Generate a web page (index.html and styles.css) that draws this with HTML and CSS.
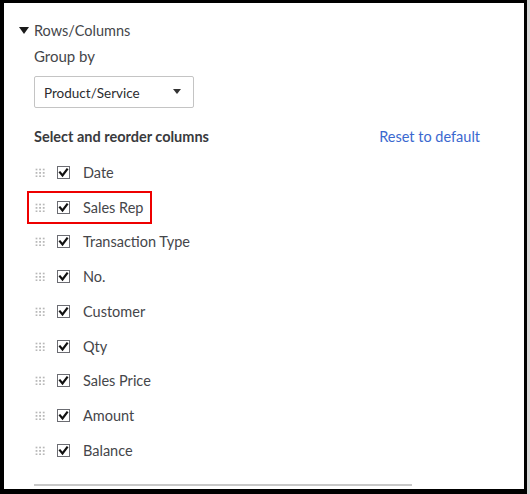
FILE: index.html
```html
<!DOCTYPE html>
<html>
<head>
<meta charset="utf-8">
<link rel="stylesheet" href="styles.css">
</head>
<body>
<div class="frame">
  <div class="panel">
    <div class="section-head">
      <span class="caret"></span>
      <span class="section-title">Rows/Columns</span>
    </div>
    <div class="content">
      <div class="label">Group by</div>
      <div class="select">
        <span>Product/Service</span>
        <span class="select-arrow"></span>
      </div>
      <div class="cols-head">
        <span class="cols-title">Select and reorder columns</span>
        <span class="reset">Reset to default</span>
      </div>
      <ul class="cols">
        <li class="col"><span class="grip"></span><span class="cb"><svg viewBox="0 0 13 13"><path d="M3 6.5 L5.5 9.5 L10 3.5" /></svg></span><span class="name">Date</span></li>
        <li class="col highlight"><span class="grip"></span><span class="cb"><svg viewBox="0 0 13 13"><path d="M3 6.5 L5.5 9.5 L10 3.5" /></svg></span><span class="name">Sales Rep</span></li>
        <li class="col"><span class="grip"></span><span class="cb"><svg viewBox="0 0 13 13"><path d="M3 6.5 L5.5 9.5 L10 3.5" /></svg></span><span class="name">Transaction Type</span></li>
        <li class="col"><span class="grip"></span><span class="cb"><svg viewBox="0 0 13 13"><path d="M3 6.5 L5.5 9.5 L10 3.5" /></svg></span><span class="name">No.</span></li>
        <li class="col"><span class="grip"></span><span class="cb"><svg viewBox="0 0 13 13"><path d="M3 6.5 L5.5 9.5 L10 3.5" /></svg></span><span class="name">Customer</span></li>
        <li class="col"><span class="grip"></span><span class="cb"><svg viewBox="0 0 13 13"><path d="M3 6.5 L5.5 9.5 L10 3.5" /></svg></span><span class="name">Qty</span></li>
        <li class="col"><span class="grip"></span><span class="cb"><svg viewBox="0 0 13 13"><path d="M3 6.5 L5.5 9.5 L10 3.5" /></svg></span><span class="name">Sales Price</span></li>
        <li class="col"><span class="grip"></span><span class="cb"><svg viewBox="0 0 13 13"><path d="M3 6.5 L5.5 9.5 L10 3.5" /></svg></span><span class="name">Amount</span></li>
        <li class="col"><span class="grip"></span><span class="cb"><svg viewBox="0 0 13 13"><path d="M3 6.5 L5.5 9.5 L10 3.5" /></svg></span><span class="name">Balance</span></li>
      </ul>
      <div class="divider"></div>
    </div>
  </div>
  <div class="edge"></div>
</div>
</body>
</html>
```
FILE: styles.css
```css
html, body {
  margin: 0;
  padding: 0;
  background: #000;
}
body {
  width: 530px;
  height: 494px;
  overflow: hidden;
  font-family: "Lato", "Open Sans", sans-serif;
  color: #393a3d;
}
.frame {
  display: flex;
  height: 494px;
  background: #000;
}
.panel {
  margin: 3px 0 5px 4px;
  width: 520px;
  height: 486px;
  background: #fff;
  box-sizing: border-box;
  padding-top: 19px;
  overflow: hidden;
}
.edge {
  margin-left: 3px;
  width: 3px;
  background: #d6d6d6;
}
.section-head {
  display: flex;
  align-items: center;
  height: 16px;
  padding-left: 15px;
}
.caret {
  width: 0;
  height: 0;
  border-left: 5px solid transparent;
  border-right: 5px solid transparent;
  border-top: 7px solid #1a1a1a;
  margin-right: 5px;
}
.section-title {
  font-size: 14.5px;
  color: #45464a;
}
.content {
  padding-left: 30px;
  padding-right: 44px;
}
.label {
  margin-top: 8px;
  font-size: 15px;
  height: 20px;
  line-height: 20px;
  color: #45464a;
}
.select {
  margin-top: 10px;
  width: 160px;
  height: 32px;
  box-sizing: border-box;
  border: 1px solid #c4c4c4;
  border-radius: 2px;
  display: flex;
  align-items: center;
  justify-content: space-between;
  padding: 1px 12px 0 9px;
  font-size: 13.5px;
  color: #2b2c2f;
}
.select-arrow {
  width: 0;
  height: 0;
  border-left: 4px solid transparent;
  border-right: 4px solid transparent;
  border-top: 5px solid #333;
  margin-bottom: 2px;
}
.cols-head {
  margin-top: 18px;
  display: flex;
  justify-content: space-between;
  align-items: center;
  height: 20px;
}
.cols-title {
  font-size: 14.5px;
  font-weight: 700;
  color: #393a3d;
}
.reset {
  font-size: 14.5px;
  color: #3b68cf;
}
.cols {
  list-style: none;
  margin: 0;
  padding: 0;
  margin-top: 9px;
}
.col {
  display: flex;
  align-items: center;
  height: 34.75px;
  position: relative;
}
.grip {
  width: 10px;
  height: 9px;
  margin-left: 1px;
  background-image: radial-gradient(circle, #b8b8b8 0.9px, transparent 1.1px);
  background-size: 3.6px 3.4px;
  background-position: -0.3px -0.2px;
}
.cb {
  margin-left: 12px;
  width: 13px;
  height: 13px;
  box-sizing: border-box;
  border: 1px solid #6b6c72;
  display: flex;
  align-items: center;
  justify-content: center;
}
.cb svg {
  width: 13px;
  height: 13px;
  flex: none;
}
.cb path {
  fill: none;
  stroke: #111;
  stroke-width: 2.2;
  stroke-linecap: square;
}
.name {
  margin-left: 13px;
  font-size: 14.5px;
  color: #45464a;
}
.highlight::before {
  content: "";
  position: absolute;
  left: -7px;
  top: 1.5px;
  width: 125px;
  height: 33px;
  box-sizing: border-box;
  border: 2px solid #ee0000;
}
.divider {
  margin-top: 16px;
  width: 378px;
  height: 2px;
  background: #c8c8c8;
}
```
